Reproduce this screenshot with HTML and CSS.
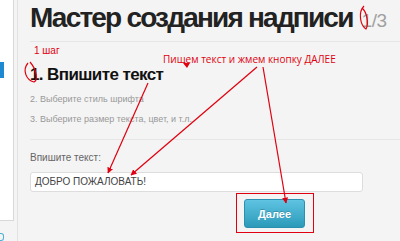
FILE: index.html
```html
<!DOCTYPE html>
<html lang="ru">
<head>
<meta charset="utf-8">
<link rel="stylesheet" href="styles.css">
</head>
<body>
<div class="page">
  <aside class="side">
    <div class="side-panel"><span class="side-tab"></span></div>
    <span class="side-icon"></span>
  </aside>
  <main class="main">
    <header class="head">
      <h1 class="title">Мастер создания надписи</h1>
      <span class="count">1/3</span>
    </header>
    <section class="steps">
      <div class="note-step">1 шаг</div>
      <h2 class="step-cur">1. Впишите текст</h2>
      <p class="step">2. Выберите стиль шрифта</p>
      <p class="step">3. Выберите размер текста, цвет, и т.л.</p>
    </section>
    <section class="form">
      <label class="lbl">Впишите текст:</label>
      <div class="input">ДОБРО ПОЖАЛОВАТЬ!</div>
      <div class="actions"><span class="btn-frame"><button class="btn">Далее</button></span></div>
    </section>
  </main>
  <div class="note-main">Пищем текст и жмем кнопку ДАЛЕЕ</div>
  <svg class="marks" width="400" height="241" viewBox="0 0 400 241">
    <defs>
      <marker id="ah" viewBox="0 0 10 10" refX="9" refY="5" markerWidth="5" markerHeight="5" orient="auto">
        <path d="M0 0 L10 5 L0 10 z" fill="#e0000f"/>
      </marker>
    </defs>
    <g stroke="#e0000f" stroke-width="1.2" fill="none">
      <path d="M28 63 C22 70 26 80 34 82 C38 80 37 70 30 62"/>
      <path d="M364 6 C358 12 360 25 366 29 C369 24 367 12 362 8"/>
      <line x1="148" y1="83" x2="108" y2="173" marker-end="url(#ah)"/>
      <line x1="257" y1="67" x2="131" y2="175" marker-end="url(#ah)"/>
      <line x1="263" y1="67" x2="286" y2="203" marker-end="url(#ah)"/>
    </g>
    <path d="M183 63 L190 63 L187 68 z" fill="#e0000f"/>
  </svg>
</div>
</body>
</html>
```
FILE: styles.css
```css
* { box-sizing: border-box; }
html, body { margin: 0; padding: 0; }
body {
  width: 400px; height: 241px; overflow: hidden;
  background: #f4f4f4;
  font-family: "Liberation Sans", Arial, sans-serif;
}
.page { position: relative; display: flex; width: 400px; height: 241px; }
.side {
  position: relative;
  width: 18px; flex: none;
  border-right: 1px solid #e2e2e2;
  background: #f4f4f4;
}
.side-panel {
  position: relative;
  width: 14px; height: 221px;
  background: #fff;
  border-right: 1px solid #d8d8d8;
  border-bottom: 1px solid #d8d8d8;
}
.side-tab {
  position: absolute; left: 0; top: 62px;
  width: 4px; height: 16px; background: #1e88d0;
}
.side-icon {
  position: absolute; left: 0; top: 233px;
  width: 4px; height: 8px; border: 1px solid #4ab0d8; border-left: none; border-radius: 0 3px 3px 0;
}
.main { flex: 1; min-width: 0; padding-left: 12px; }
.head {
  display: flex; align-items: baseline;
  height: 42px;
  padding-top: 1px;
  border-bottom: 1px solid #e6e6e6;
  white-space: nowrap;
}
.title {
  margin: 0; font-size: 28px; font-weight: bold; color: #222;
  line-height: 33px; letter-spacing: -1.8px;
}
.count { margin-left: 9px; font-size: 19px; color: #a0a0a0; letter-spacing: -0.5px; }
.steps { padding-top: 3px; height: 98px; border-bottom: 1px solid #e6e6e6; }
.note-step { color: #e0000f; font-size: 10px; line-height: 12px; margin-left: 4px; }
.step-cur { margin: 8px 0 0; font-size: 17px; line-height: 20px; font-weight: bold; color: #111; letter-spacing: -0.6px; white-space: nowrap; }
.step { margin: 8px 0 0; font-size: 9px; line-height: 12px; color: #999; }
.form { padding-top: 12px; }
.lbl { display: block; font-size: 10px; color: #666; line-height: 12px; }
.input {
  margin-top: 8px; width: 333px; height: 20px;
  background: #fff; border: 1px solid #ddd; border-radius: 3px;
  font-size: 10px; color: #444; line-height: 18px; padding-left: 4px;
}
.actions { display: flex; padding-left: 206px; margin-top: 1px; }
.btn-frame { border: 1px solid #e0000f; padding: 5px 8px 4px 7px; }
.btn {
  width: 61px; height: 29px;
  border: 1px solid #2a8fb0; border-radius: 3px;
  background: linear-gradient(#5fc3e2, #2c9ab9);
  color: #fff; font-weight: bold; font-size: 11px;
  font-family: "Liberation Sans", Arial, sans-serif;
  text-shadow: 0 -1px 0 rgba(0,0,0,.2);
}
.note-main {
  position: absolute; left: 163px; top: 53px;
  color: #e0000f; font-size: 10px; line-height: 13px;
  font-family: "Open Sans", "Liberation Sans", sans-serif;
  white-space: nowrap;
}
.marks { position: absolute; left: 0; top: 0; pointer-events: none; }
```
